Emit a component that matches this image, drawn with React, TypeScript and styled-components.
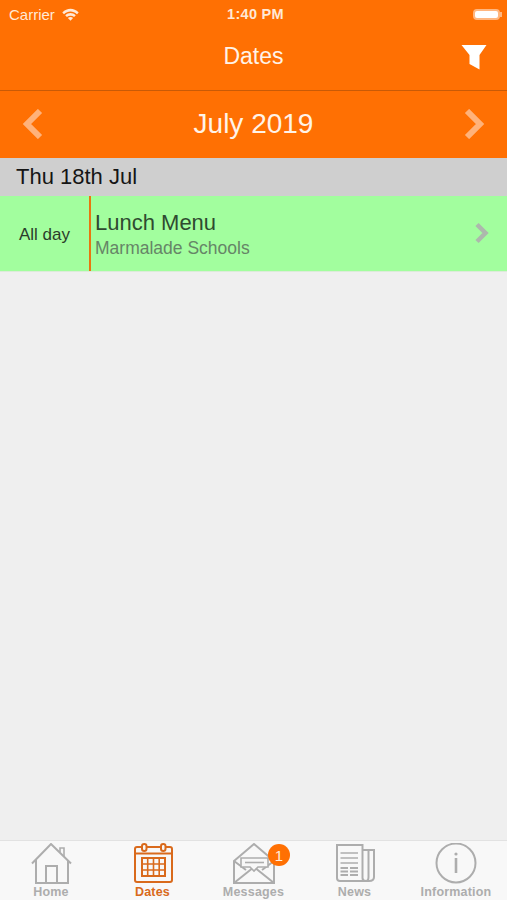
import * as React from 'react'
import styled, { createGlobalStyle } from 'styled-components'

const GlobalStyle = createGlobalStyle`
  html, body {
    margin: 0;
    padding: 0;
    height: 100%;
    background: #efefef;
    font-family: 'Liberation Sans', Arial, sans-serif;
  }
`

const Screen = styled.div`
  width: 507px;
  height: 900px;
  display: flex;
  flex-direction: column;
  overflow: hidden;
  background: #efefef;
`

const StatusBar = styled.div`
  height: 28px;
  padding: 0 5px 0 9px;
  display: grid;
  grid-template-columns: 1fr auto 1fr;
  align-items: center;
  background: #ff7003;
  color: #ffe9d6;
  font-size: 15px;
`

const Carrier = styled.div`
  display: flex;
  align-items: center;
  gap: 7px;
`

const Time = styled.div`
  font-weight: 700;
  font-size: 14.5px;
  letter-spacing: 0.3px;
`

const BatteryShell = styled.div`
  justify-self: end;
  display: flex;
  align-items: center;
`

const Battery = styled.div`
  width: 23px;
  height: 7px;
  border: 2px solid #ffb680;
  border-radius: 4px;
  background: #fff;
`

const BatteryTip = styled.div`
  width: 2px;
  height: 5px;
  background: #ffb680;
`

const NavBar = styled.div`
  height: 63px;
  position: relative;
  display: flex;
  align-items: center;
  justify-content: center;
  padding-bottom: 6px;
  box-sizing: border-box;
  background: #ff7003;
  border-bottom: 1px solid #c95a06;
  color: #fff3e8;
  font-size: 23px;
`

const FilterButton = styled.div`
  position: absolute;
  right: 20px;
  top: 16px;
  line-height: 0;
`

const MonthBar = styled.div`
  height: 67px;
  padding: 0 22px 2px;
  box-sizing: border-box;
  display: flex;
  align-items: center;
  justify-content: space-between;
  background: #ff7003;
  color: #fff3e8;
  font-size: 28px;
`

const Arrow = styled.div`
  line-height: 0;
`

const DayHeader = styled.div`
  height: 38px;
  padding: 0 16px;
  display: flex;
  align-items: center;
  background: #cfcfcf;
  color: #151515;
  font-size: 22px;
`

const EventRow = styled.div`
  height: 75px;
  display: flex;
  align-items: stretch;
  background: #a2fe9e;
  border-bottom: 1px solid #dcebd9;
`

const EventTime = styled.div`
  width: 89px;
  padding-top: 2px;
  box-sizing: border-box;
  display: flex;
  align-items: center;
  justify-content: center;
  color: #2b3d2b;
  font-size: 17px;
`

const EventBody = styled.div`
  flex: 1;
  padding: 14px 0 0 4px;
  border-left: 2px solid #e9760f;
`

const EventTitle = styled.div`
  color: #2f4a30;
  font-size: 22px;
  line-height: 26px;
`

const EventPlace = styled.div`
  color: #668567;
  font-size: 17.5px;
  line-height: 24px;
`

const EventChevron = styled.div`
  width: 46px;
  padding: 0 0 2px 12px;
  box-sizing: border-box;
  display: flex;
  align-items: center;
  line-height: 0;
`

const Content = styled.div`
  flex: 1;
  background: #efefef;
`

const TabBar = styled.div`
  height: 59px;
  display: grid;
  grid-template-columns: 102px 101px 101px 101px 102px;
  background: #f8f8f8;
  border-top: 1px solid #e2e2e2;
`

const Tab = styled.div<{ $active?: boolean }>`
  position: relative;
  display: flex;
  flex-direction: column;
  align-items: center;
  padding-top: 2px;
  color: ${p => (p.$active ? '#d96a1c' : '#adadad')};
  font-size: 12.5px;
  font-weight: 700;
`

const TabIcon = styled.svg`
  width: 44px;
  height: 42px;
  display: block;
`

const TabLabel = styled.div`
  line-height: 14px;
  white-space: nowrap;
  letter-spacing: 0.2px;
`

const Badge = styled.div`
  position: absolute;
  top: 3px;
  left: 65px;
  width: 22px;
  height: 22px;
  border-radius: 50%;
  background: #ff7003;
  color: #ffeedd;
  font-size: 15px;
  font-weight: 400;
  display: flex;
  align-items: center;
  justify-content: center;
`

const HomeIcon = () => (
  <TabIcon viewBox="0 0 44 42" fill="none" stroke="currentColor" strokeWidth="2">
    <path d="M3 20.5 L22 1 L42 20.5" />
    <path d="M31 9 V5 H35 V14" strokeWidth="1.6" />
    <path d="M7 17 V40 H39 V17" />
    <path d="M17 40 V23 H28 V40" />
  </TabIcon>
)

const DatesIcon = () => (
  <TabIcon viewBox="0 0 44 42" fill="none" stroke="currentColor" strokeWidth="2">
    <rect x="4" y="4" width="37" height="35" rx="2" />
    <path d="M4 10.5 H41" />
    <rect x="11" y="1" width="4.5" height="7" rx="2.2" fill="#f8f8f8" />
    <rect x="30" y="1" width="4.5" height="7" rx="2.2" fill="#f8f8f8" />
    <rect x="11" y="15" width="23" height="18" />
    <path d="M16.7 15 V33 M22.5 15 V33 M28.2 15 V33 M11 21 H34 M11 27 H34" strokeWidth="1.6" />
  </TabIcon>
)

const MessagesIcon = () => (
  <TabIcon viewBox="0 0 44 42" fill="none" stroke="currentColor" strokeWidth="2">
    <path d="M2 18 L22 1 L42 18 V40 H2 Z" />
    <path d="M2 40 L22 24 L42 40" />
    <path d="M2 18 L14 27 M42 18 L30 27" />
    <path d="M9 15 H36 V24 H26 L22 28 L18 24 H9 Z" fill="#f8f8f8" strokeWidth="1.6" />
    <path d="M13 19.5 H32" strokeWidth="1.6" />
  </TabIcon>
)

const NewsIcon = () => (
  <TabIcon viewBox="0 0 44 42" fill="none" stroke="currentColor" strokeWidth="2">
    <path d="M4 2 H29.5 V35 C29.5 37 31 38 33 38 H7 C5 38 4 37 4 35 Z" />
    <path d="M29.5 7 H41 V34 C41 37 39 38 36 38 H33 C35 38 35.5 36 35.5 34 V7" />
    <path d="M7.5 10 H25 M7.5 15 H25 M7.5 20 H25" strokeWidth="1.6" />
    <path d="M7.5 25 H15 M7.5 28.5 H15 M7.5 32 H15 M17 25 H25 M17 28.5 H25 M17 32 H25" strokeWidth="1.8" />
  </TabIcon>
)

const InfoIcon = () => (
  <TabIcon viewBox="0 0 44 42" fill="none" stroke="currentColor" strokeWidth="2">
    <circle cx="22" cy="20" r="19.5" />
    <path d="M22 15 V30" strokeWidth="2.6" />
    <circle cx="22" cy="11" r="1.6" fill="currentColor" stroke="none" />
  </TabIcon>
)

export default function App() {
  return (
    <Screen>
      <GlobalStyle />
      <StatusBar>
        <Carrier>
          Carrier
          <svg width="17" height="13" viewBox="0 0 17 13">
            <path d="M0.3 4.4 C5 -0.4 12 -0.4 16.7 4.4 L15 6.2 C11 2.6 6 2.6 2 6.2 Z" fill="#ffe9d6" />
            <path d="M3.2 7.2 C6.3 4.4 10.7 4.4 13.8 7.2 L12.1 9 C10 7.2 7 7.2 4.9 9 Z" fill="#ffe9d6" />
            <path d="M5.9 9.9 C7.4 8.7 9.6 8.7 11.1 9.9 L8.5 12.8 Z" fill="#ffe9d6" />
          </svg>
        </Carrier>
        <Time>1:40 PM</Time>
        <BatteryShell>
          <Battery />
          <BatteryTip />
        </BatteryShell>
      </StatusBar>
      <NavBar>
        Dates
        <FilterButton>
          <svg width="26" height="26" viewBox="0 0 26 26">
            <path d="M0.5 1 H25.5 L18.5 11 V25.5 L8.5 20 V11 Z" fill="#fff" />
          </svg>
        </FilterButton>
      </NavBar>
      <MonthBar>
        <Arrow>
          <svg width="22" height="30" viewBox="0 0 22 30" fill="none" stroke="#ffb27a" strokeWidth="6">
            <path d="M18 2 L5 15 L18 28" />
          </svg>
        </Arrow>
        July 2019
        <Arrow>
          <svg width="22" height="30" viewBox="0 0 22 30" fill="none" stroke="#ffb27a" strokeWidth="6">
            <path d="M4 2 L17 15 L4 28" />
          </svg>
        </Arrow>
      </MonthBar>
      <DayHeader>Thu 18th Jul</DayHeader>
      <EventRow>
        <EventTime>All day</EventTime>
        <EventBody>
          <EventTitle>Lunch Menu</EventTitle>
          <EventPlace>Marmalade Schools</EventPlace>
        </EventBody>
        <EventChevron>
          <svg width="18" height="22" viewBox="0 0 18 22" fill="none" stroke="#adb8ad" strokeWidth="4.5">
            <path d="M4 2.5 L12.5 11 L4 19.5" />
          </svg>
        </EventChevron>
      </EventRow>
      <Content />
      <TabBar>
        <Tab>
          <HomeIcon />
          <TabLabel>Home</TabLabel>
        </Tab>
        <Tab $active>
          <DatesIcon />
          <TabLabel>Dates</TabLabel>
        </Tab>
        <Tab>
          <MessagesIcon />
          <TabLabel>Messages</TabLabel>
          <Badge>1</Badge>
        </Tab>
        <Tab>
          <NewsIcon />
          <TabLabel>News</TabLabel>
        </Tab>
        <Tab>
          <InfoIcon />
          <TabLabel>Information</TabLabel>
        </Tab>
      </TabBar>
    </Screen>
  )
}
